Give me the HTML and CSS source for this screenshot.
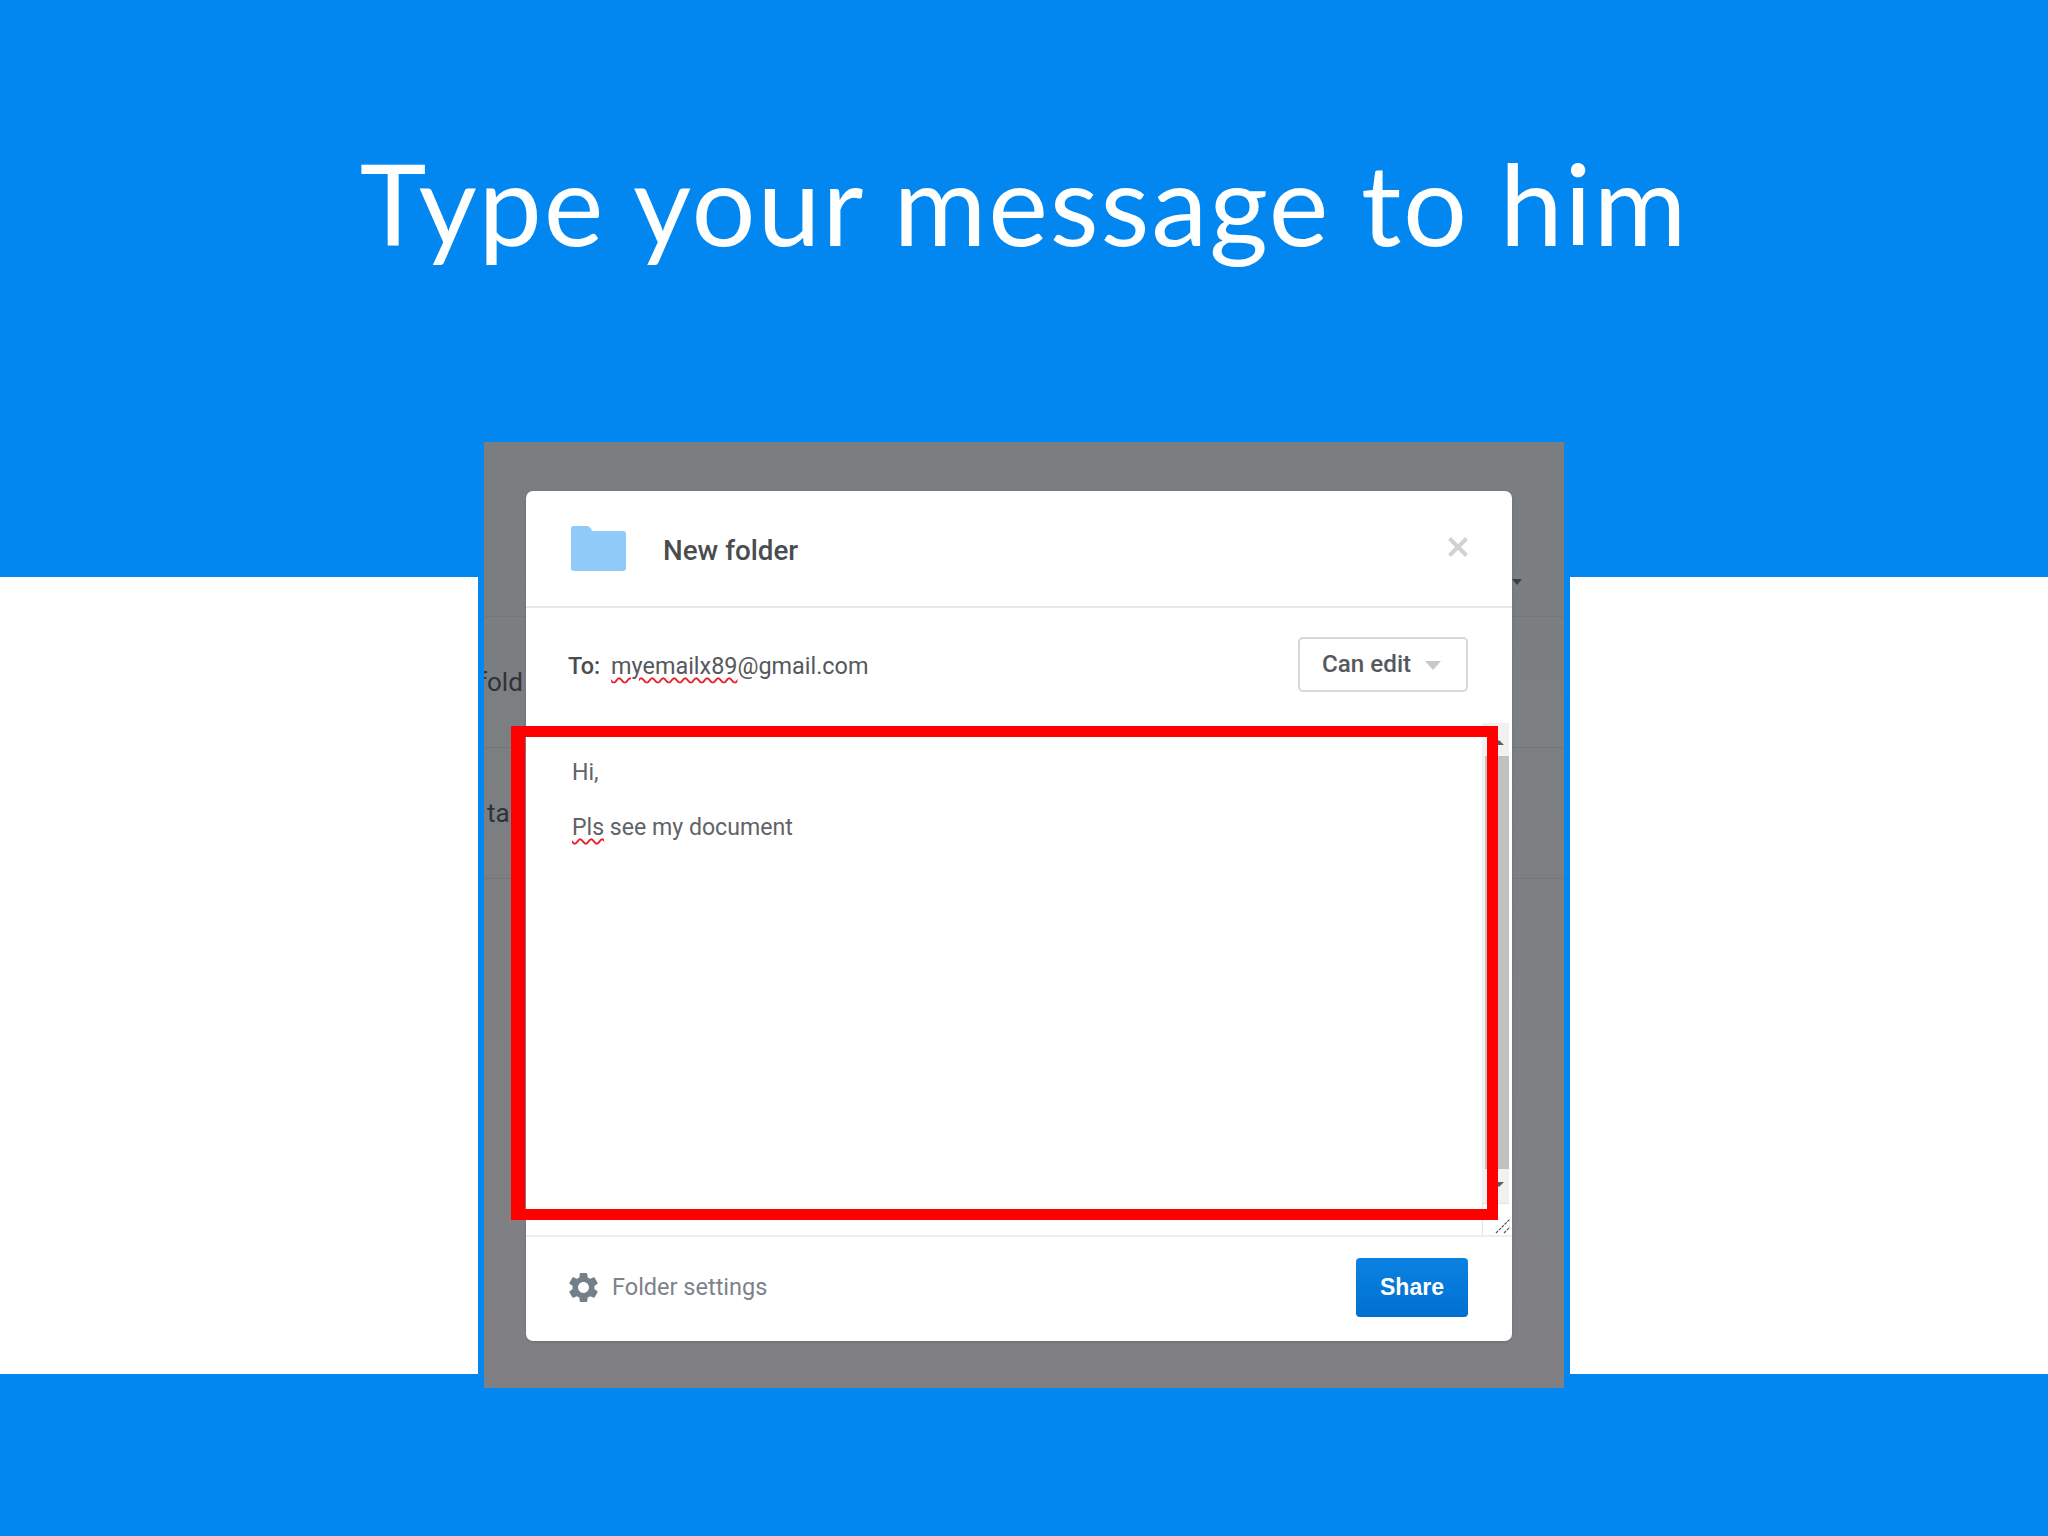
FILE: index.html
```html
<!DOCTYPE html>
<html lang="en">
<head>
    <meta charset="UTF-8">
    <meta name="viewport" content="width=device-width, initial-scale=1.0">
    <title>Type your message to him</title>
    <link rel="stylesheet" href="styles.css">
</head>
<body>
    <div class="slide">
        <header class="band band-top">
            <h1>Type your message to him</h1>
        </header>
        <div class="band band-middle"></div>
        <div class="band band-bottom"></div>

        <!-- screenshot pasted on the slide -->
        <figure class="shot">
            <div class="page-row page-row-head"></div>
            <div class="page-row"><span class="row-text row-first">fold</span></div>
            <div class="page-row"><span class="row-text row-second">ta t</span></div>
            <span class="page-caret"></span>

            <div class="modal">
                <div class="modal-header">
                    <svg class="folder-icon" viewBox="0 0 55 45">
                        <path d="M0 3a3 3 0 0 1 3-3h13a5 5 0 0 1 4 2.500l1 2.500h31a3 3 0 0 1 3 3v34a3 3 0 0 1-3 3H3a3 3 0 0 1-3-3z" fill="#90caf9"/>
                    </svg>
                    <span class="modal-title">New folder</span>
                    <svg class="close-icon" viewBox="0 0 20 20">
                        <path d="M1.500 1.500l17 17M18.500 1.500l-17 17" stroke="#d2d2d2" stroke-width="4" fill="none"/>
                    </svg>
                </div>

                <div class="to-row">
                    <span class="to-label">To:</span>
                    <span class="to-value"><span class="typo">myemailx89</span>@gmail.com</span>
                    <button class="perm-btn">Can edit<span class="perm-caret"></span></button>
                </div>

                <div class="message-box">
                    <div class="message-text">
                        <p>Hi,</p>
                        <p>&nbsp;</p>
                        <p><span class="typo">Pls</span> see my document</p>
                    </div>
                    <div class="scroll-col">
                        <div class="scrollbar">
                            <span class="arrow arrow-up"></span>
                            <span class="thumb"></span>
                            <span class="arrow arrow-down"></span>
                        </div>
                        <div class="resizer">
                            <svg viewBox="0 0 16 16">
                                <path d="M1 15L15 1M9 15l6-6" stroke="#555" stroke-width="1.200" stroke-dasharray="3 1" fill="none"/>
                            </svg>
                        </div>
                    </div>
                </div>

                <div class="modal-footer">
                    <svg class="gear-icon" viewBox="2.400 1.800 19.200 20.400">
                        <path fill-rule="evenodd" d="M19.140 12.940c.04-.3.06-.61.06-.94 0-.32-.02-.64-.07-.94l2.030-1.580a.49.49 0 0 0 .12-.61l-1.920-3.320a.488.488 0 0 0-.59-.22l-2.390.96c-.5-.38-1.030-.7-1.620-.94l-.36-2.540a.484.484 0 0 0-.48-.41h-3.840c-.24 0-.43.17-.47.41l-.36 2.540c-.59.24-1.130.57-1.620.94l-2.390-.96c-.22-.08-.47 0-.59.22L2.740 8.870c-.12.21-.08.47.12.61l2.030 1.580c-.05.3-.09.63-.09.94s.02.64.07.94l-2.030 1.580a.49.49 0 0 0-.12.61l1.920 3.320c.12.22.37.29.59.22l2.390-.96c.5.38 1.030.7 1.620.94l.36 2.540c.05.24.24.41.48.41h3.840c.24 0 .44-.17.47-.41l.36-2.540c.59-.24 1.130-.56 1.620-.94l2.390.96c.22.08.47 0 .59-.22l1.920-3.320c.12-.22.07-.47-.12-.61l-2.010-1.580zM12 15.600c-1.980 0-3.600-1.620-3.600-3.600s1.620-3.600 3.600-3.600 3.600 1.620 3.600 3.600-1.620 3.600-3.600 3.600z" fill="#748089"/>
                    </svg>
                    <span class="settings-link">Folder settings</span>
                    <button class="share-btn">Share</button>
                </div>
            </div>

            <!-- red highlight drawn over the screenshot -->
            <div class="highlight"></div>
        </figure>
    </div>
</body>
</html>
```

FILE: styles.css
```css
* {
    margin: 0;
    padding: 0;
    box-sizing: border-box;
}

body {
    font-family: Roboto, "Liberation Sans", sans-serif;
    background-color: #fff;
}

.slide {
    position: relative;
    width: 2048px;
    height: 1536px;
    overflow: hidden;
    display: flex;
    flex-direction: column;
}

.band-top {
    height: 577px;
    background-color: #0187ef;
    padding-top: 132px;
}

.band-middle {
    height: 797px;
    background-color: #fff;
}

.band-bottom {
    height: 162px;
    background-color: #0187ef;
}

h1 {
    font-family: Lato, "Open Sans", sans-serif;
    font-size: 113px;
    font-weight: 400;
    letter-spacing: 1.800px;
    line-height: 140px;
    color: #fff;
    text-align: center;
}

/* pasted screenshot */
.shot {
    position: absolute;
    left: 478px;
    top: 436px;
    width: 1092px;
    height: 958px;
    border: 6px solid #0187ef;
    background: linear-gradient(#7a7e81, #808084);
    overflow: hidden;
}

.page-row {
    height: 131px;
    border-bottom: 1px solid #74777a;
    display: flex;
    align-items: center;
}

.page-row-head {
    height: 175px;
}

.row-text {
    font-size: 26px;
    color: #2f3236;
}

.row-first {
    margin-left: -6px;
}

.row-second {
    margin-left: 3px;
}

.page-caret {
    position: absolute;
    left: 1028px;
    top: 137px;
    border-left: 5px solid transparent;
    border-right: 5px solid transparent;
    border-top: 6px solid #3c3f42;
}

.modal {
    position: absolute;
    left: 42px;
    top: 49px;
    width: 986px;
    height: 850px;
    background-color: #fff;
    border-radius: 7px;
    box-shadow: 0 1px 3px rgba(0, 0, 0, 0.15);
    display: flex;
    flex-direction: column;
    overflow: hidden;
}

.modal-header {
    height: 117px;
    flex: none;
    display: flex;
    align-items: center;
    padding: 0 44px 0 45px;
    border-bottom: 2px solid #e6e8ea;
}

.folder-icon {
    width: 55px;
    height: 45px;
    margin-right: 37px;
}

.modal-title {
    font-size: 27.800px;
    font-weight: 500;
    color: #4a4d50;
    padding-top: 3px;
}

.close-icon {
    width: 20px;
    height: 20px;
    margin-left: auto;
    margin-top: -3px;
}

.to-row {
    height: 115px;
    flex: none;
    display: flex;
    align-items: center;
    padding: 0 44px 0 42px;
    font-size: 23.400px;
    color: #55585c;
}

.to-label {
    font-weight: 500;
    color: #4a4d50;
    margin-right: 11px;
}

.typo {
    text-decoration: underline wavy #e8202a;
    text-decoration-thickness: 1.500px;
    text-underline-offset: 3px;
}

.perm-btn {
    margin-left: auto;
    width: 170px;
    height: 55px;
    display: flex;
    align-items: center;
    padding-left: 22px;
    background-color: #fff;
    border: 2px solid #d6d8da;
    border-radius: 5px;
    font-family: inherit;
    font-size: 24.200px;
    font-weight: 500;
    color: #55595e;
    margin-top: -3px;
}

.perm-caret {
    margin-left: 14px;
    margin-top: 3px;
    border-left: 8px solid transparent;
    border-right: 8px solid transparent;
    border-top: 9px solid #c6c8ca;
}

.message-box {
    height: 514px;
    flex: none;
    display: flex;
    border-bottom: 2px solid #eceef0;
}

.message-text {
    flex: 1;
    padding: 36px 0 0 46px;
    font-size: 23.100px;
    line-height: 27.500px;
    color: #606367;
}

.scroll-col {
    width: 30px;
    flex: none;
    display: flex;
    flex-direction: column;
}

.scrollbar {
    height: 481px;
    flex: none;
    position: relative;
    background-color: #f1f1f1;
    border-bottom: 1px solid #e3e3e3;
    padding-top: 33px;
    margin-right: 3px;
}

.thumb {
    display: block;
    height: 413px;
    margin-left: 3px;
    background-color: #c1c1c1;
}

.arrow {
    position: absolute;
    right: 5px;
    border-left: 5px solid transparent;
    border-right: 5px solid transparent;
}

.arrow-up {
    top: 17px;
    border-bottom: 5px solid #606060;
}

.arrow-down {
    bottom: 16px;
    border-top: 5px solid #606060;
}

.resizer {
    flex: 1;
    border-left: 1px solid #e3e3e3;
    display: flex;
    justify-content: flex-end;
    align-items: flex-end;
    padding: 0 1px 1px 0;
}

.resizer svg {
    width: 16px;
    height: 16px;
}

.modal-footer {
    flex: 1;
    display: flex;
    align-items: center;
    padding: 0 44px 4px 42px;
}

.gear-icon {
    width: 31px;
    height: 31px;
    margin-right: 13px;
}

.settings-link {
    font-size: 23.500px;
    color: #7c8388;
}

.share-btn {
    margin-left: auto;
    width: 112px;
    height: 59px;
    border: none;
    border-radius: 4px;
    background: linear-gradient(#0a82e3, #0070d0);
    color: #fff;
    font-family: "Liberation Sans", Arial, sans-serif;
    font-size: 23px;
    font-weight: 700;
}

.highlight {
    position: absolute;
    left: 27px;
    top: 284px;
    width: 987px;
    height: 494px;
    border: 11px solid #f00;
    border-left-width: 14px;
}
```
